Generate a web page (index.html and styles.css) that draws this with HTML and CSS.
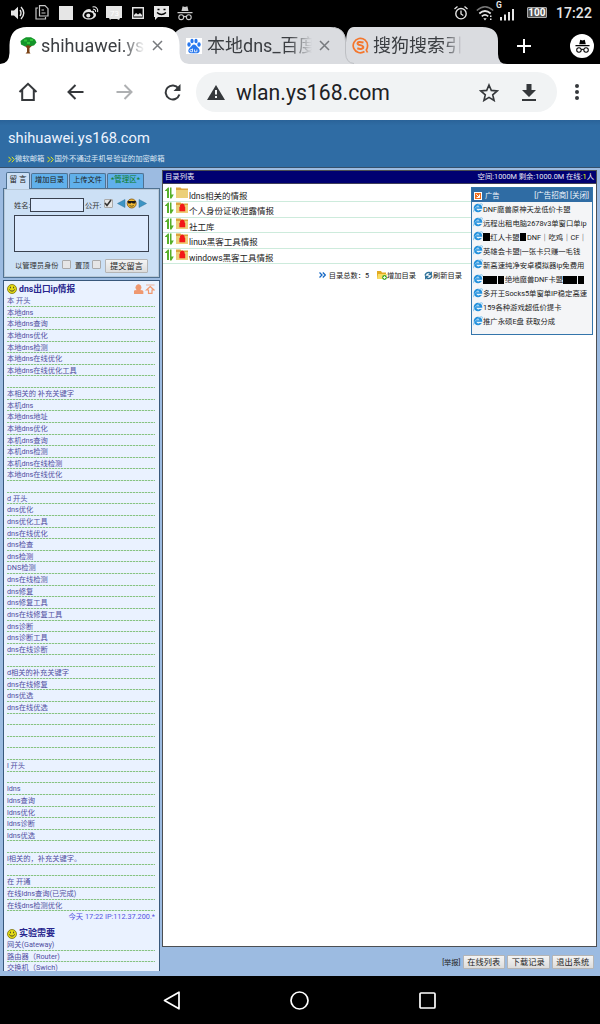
FILE: index.html
```html
<!DOCTYPE html>
<html>
<head>
<meta charset="utf-8">
<title>shihuawei.ys168.com</title>
<link rel="stylesheet" href="styles.css">
</head>
<body>
<svg width="0" height="0" class="defs">
  <defs>
    <symbol id="updown" viewBox="0 0 9 12"><path d="M0 3.500L3 .5h1V11H2V4H0zM5 .5h1.500v7H8.800L6.500 11.500H5z" fill="#58b02c"/></symbol>
    <symbol id="folder" viewBox="0 0 12 11"><path d="M0 0.500h4.500l1 1H12V11H0z" fill="#dba43c"/><path d="M0 3h12v8H0z" fill="#ecd078"/></symbol>
    <symbol id="lock" viewBox="0 0 12 11"><path d="M0 0.500h4.500l1 1H12V11H0z" fill="#dba43c"/><path d="M0 3h12v8H0z" fill="#ecd078"/><path d="M3.400 5h5.800v4.300H3.400z" fill="#f31818"/><path d="M4.400 5.200V4a1.900 1.900 0 0 1 3.800 0v1.200" fill="#f31818" stroke="#f31818" stroke-width="1"/></symbol>
    <symbol id="ie" viewBox="0 0 10 10"><circle cx="5" cy="5" r="4.300" fill="#2591dc"/><path d="M3.200 4.300Q5 2 6.800 4.300zM3.200 5.800H9.500L8.800 7H6.500Q4.500 8.500 3.200 5.800z" fill="#e4f3fd"/><path d="M0.700 9.200C-0.500 7 5.500 0.200 9 0.800 9.800 1.100 9.500 2 9 2.700" fill="none" stroke="#7cc4f0" stroke-width="0.900"/></symbol>
    <symbol id="face" viewBox="0 0 10 10"><circle cx="5" cy="5" r="4.500" fill="#e6dc14" stroke="#77700c" stroke-width="0.800"/><path d="M3.400 2.700v1.600M6.600 2.700v1.600M2.200 5.500Q5 8.800 7.800 5.500" fill="none" stroke="#333" stroke-width="0.900"/></symbol>
    <symbol id="spy" viewBox="0 0 16 16"><path d="M4.500 6L5.600 1.300 8 2l2.400-.7L11.500 6zM0.500 7h15v1.300H0.500z"/><g fill="none" stroke="currentColor" stroke-width="1.100"><circle cx="4.200" cy="12.200" r="2.400"/><circle cx="11.800" cy="12.200" r="2.400"/><path d="M6.600 12q1.400-1.200 2.800 0"/></g></symbol>
  </defs>
</svg>

<div class="status">
  <div class="status-left">
    <svg width="14" height="14" viewBox="0 0 14 14"><path d="M0 4.500h3L7 0.800v12.400L3 9.500H0z" fill="#e6e6e6"/><path d="M9 4q2 3 0 6M10 1q5.500 6 0 12" fill="none" stroke="#e6e6e6" stroke-width="1.400"/></svg>
    <svg class="i-copy" width="14" height="15" viewBox="0 0 14 15"><path d="M4.500 .7H10l3 3V11H4.500zM3 3H1v11h9.500v-2M6.500 5H9M6.500 8h4" fill="none" stroke="#c8c8c8" stroke-width="1.200"/></svg>
    <svg class="i-sq" width="14" height="14"><rect width="14" height="14" fill="#e6e6e6"/></svg>
    <svg class="i-weibo" width="17" height="14" viewBox="0 0 17 14"><path d="M7 3C4 3 .5 6.500 .5 9.300S3.500 13.500 7 13.500s7-2 7-4.600c0-1.500-1-2-2-2.300.5-2-1-2.400-3-1.500C9.300 3.700 8.500 3 7 3z" fill="#e6e6e6"/><ellipse cx="6.800" cy="9.200" rx="4.600" ry="3.100"/><circle cx="6.300" cy="9.500" r="2" fill="#e6e6e6"/><path d="M10.500 1c3-1 6 1.500 5 5M11 3.300c1.800-.3 3 .8 2.500 2.500" fill="none" stroke="#e6e6e6" stroke-width="1.100"/></svg>
    <svg class="i-cal" width="16" height="14" viewBox="0 0 16 14"><path d="M0 0h16v12h-2l-1 2-2-1H5l-1 1-1-2H0z" fill="#e6e6e6"/><text x="4" y="9.500" font-size="8" fill="#fff">73</text></svg>
    <svg class="i-pic" width="12" height="12" viewBox="0 0 12 12"><path d="M.7.7h10.600v10.600H.7z" fill="none" stroke="#e6e6e6" stroke-width="1.400"/><path d="M2 9.500V8l2-2 2 1.500L8 6l2 2v1.500z" fill="#e6e6e6"/></svg>
    <svg class="i-msg" width="15" height="14" viewBox="0 0 15 14"><path d="M0 0h15v11H4l-3 3V11H0z" fill="#e6e6e6"/><path d="M3.500 3.500h2M9.500 3.500h2M3 6.500q4.500 4 9 0" fill="none" stroke="#000" stroke-width="1.300"/></svg>
    <svg class="i-spy" width="16" height="16" fill="#ccc" color="#ccc"><use href="#spy"/></svg>
  </div>
  <div class="status-right">
    <svg width="14" height="14" viewBox="0 0 14 14"><circle cx="7" cy="7.700" r="5.200" fill="none" stroke="#e6e6e6" stroke-width="1.400"/><path d="M.5 3L3.500.6M13.500 3L10.500.6M7 4.500V8l2.300 1.500" fill="none" stroke="#e6e6e6" stroke-width="1.300"/></svg>
    <svg class="i-wifi" width="18" height="16" viewBox="0 0 18 16"><path d="M.8 5.500Q9-2 17.200 5.500" fill="none" stroke="#777" stroke-width="1.500"/><path d="M3.300 8.500q5.700-5 11.400 0M5.800 11.300q3.200-2.800 6.400 0" fill="none" stroke="#e6e6e6" stroke-width="1.700"/><path d="M7.300 13.300h3.400L9 15.500zM14 10.500h1.500v1.500H14zM14 13.500h1.500V15H14z" fill="#e6e6e6"/></svg>
    <div class="signal"><b class="g">G</b><svg width="14" height="12"><path d="M0 8h2v3.500H0zM4 5.500h2v6H4zM8 3h2v8.500H8zM12 0h2v11.500h-2z" fill="#e6e6e6"/></svg></div>
    <span class="battery">100</span>
    <span class="clock">17:22</span>
  </div>
</div>

<div class="tabs">
  <svg class="tab-shapes" width="600" height="37" viewBox="0 0 600 37"><path d="M338 37Q346 37 346 27V16Q346 0 354 0H482Q498 0 498 14V27Q498 37 507 37z" fill="#dadce0"/><path d="M170 37V14Q176 0 188 0H330Q345 0 346 14V27Q346 37 354 37z" fill="#dadce0"/><path d="M334 .5Q345 2 345.500 14V26Q346 36 354 36.500" fill="none" stroke="#bdbfc3"/><path d="M0 37Q9 37 9.500 26V18Q10 0 27 0H162Q179 0 179.500 18V26Q180 37 189 37z" fill="#fff"/></svg>
  <div class="tab-row">
    <div class="tab t1">
      <svg width="17" height="17" viewBox="0 0 17 17"><path d="M7.300 8L4 8 7 11v4l-1.500 1.500h5L9.500 15v-4L13 8z" fill="#7b4316"/><path d="M3 2L6 .3h5L15 2.500l1.500 3L14 8.500l-4 .5-2-1-3 1.500L1 7.500.5 4z" fill="#15952a"/><path d="M4 2.500h3v2H4zM10 2h3v2h-3zM7 5h3v2H7z" fill="#2fc436"/></svg>
      <span class="tt">shihuawei.ys</span>
      <svg class="x" width="11" height="11" viewBox="0 0 11 11"><path d="M1 1l9 9M10 1l-9 9" stroke="#777a7e" stroke-width="1.500"/></svg>
    </div>
    <div class="tab t2">
      <svg width="16" height="16" viewBox="0 0 16 16"><path d="M0 0h16v16H0z" fill="#fff"/><g fill="#2878ee"><ellipse cx="3" cy="6.500" rx="1.700" ry="2.200"/><ellipse cx="6" cy="3" rx="1.600" ry="2.200"/><ellipse cx="10" cy="3" rx="1.600" ry="2.200"/><ellipse cx="13" cy="6.500" rx="1.700" ry="2.200"/><path d="M8 6.500c2 0 2.500 2 4 3.300 2.500 2.200 2 5.200-.8 5.400-1.700 0-4.700 0-6.400 0C2 15 1.500 12 4 9.800 5.500 8.500 6 6.500 8 6.500z"/></g><path d="M6.500 10.500v3.300H5a1 1 0 0 1 0-2.200h1.500M8.500 11.500v2.300h2.400v-2.300" fill="none" stroke="#fff" stroke-width=".8"/></svg>
      <span class="tt">本地dns_百度</span>
      <svg class="x" width="11" height="11" viewBox="0 0 11 11"><path d="M1 1l9 9M10 1l-9 9" stroke="#777a7e" stroke-width="1.500"/></svg>
    </div>
    <div class="tab t3">
      <svg width="17" height="17" viewBox="0 0 17 17"><path d="M12.500 14.500A7.200 7.200 0 1 1 15.600 8.500Q15.600 11 14.300 13L15.500 15.500" fill="none" stroke="#f4762c" stroke-width="1.700"/><path d="M11.500 5.500Q5.500 4 5.500 6.500c0 2.200 5.800 1 5.800 3.600 0 2.400-4 2-6 1.200" fill="none" stroke="#f4762c" stroke-width="2"/></svg>
      <span class="tt">搜狗搜索引</span>
    </div>
    <svg class="plus" width="14" height="14"><path d="M7 0v14M0 7h14" stroke="#fff" stroke-width="2"/></svg>
    <div class="incog"><svg width="15" height="16" viewBox="0 0 16 16" fill="#000" color="#000"><use href="#spy" width="16" height="16"/></svg></div>
  </div>
</div>

<div class="toolbar">
  <svg class="b-home" width="20" height="20" viewBox="0 0 20 20"><path d="M1.500 10L10 1.800 18.500 10M4.200 8v10h11.600V8" fill="none" stroke="#35383b" stroke-width="2"/></svg>
  <svg class="b-back" width="17" height="16" viewBox="0 0 17 16"><path d="M16.500 8H2M8.500 1L1.500 8l7 7" fill="none" stroke="#35383b" stroke-width="2"/></svg>
  <svg class="b-fwd" width="17" height="16" viewBox="0 0 17 16"><path d="M.5 8H15M8.500 1l7 7-7 7" fill="none" stroke="#aeb0b2" stroke-width="2"/></svg>
  <svg class="b-rel" width="17" height="17" viewBox="0 0 17 17"><path d="M14.500 4.500A7 7 0 1 0 15.400 10.500" fill="none" stroke="#35383b" stroke-width="2"/><path d="M16.500 0v7h-7z" fill="#35383b"/></svg>
  <div class="omnibox">
    <svg width="18" height="15" viewBox="0 0 18 15"><path d="M9 0l9 15H0z" fill="#35383b"/><path d="M8 5h2v4.500H8zM8 11h2v2H8z" fill="#f1f3f4"/></svg>
    <span class="url">wlan.ys168.com</span>
    <svg class="star" width="20" height="19" viewBox="0 0 20 19"><path d="M10 2l2.300 5.400 5.900.5-4.500 3.900 1.400 5.700L10 14.400l-5.100 3.100 1.400-5.700L1.800 7.900l5.900-.5z" fill="none" stroke="#35383b" stroke-width="1.600"/></svg>
    <svg class="dl" width="14" height="17" viewBox="0 0 14 17"><path d="M4.500 0h5v6H14l-7 7-7-7h4.500zM0 15h14v2H0z" fill="#35383b"/></svg>
  </div>
  <svg class="dots" width="4" height="16" fill="#35383b"><circle cx="2" cy="2" r="2"/><circle cx="2" cy="8" r="2"/><circle cx="2" cy="14" r="2"/></svg>
</div>

<div class="page">
  <div class="site-head">
    <div class="site-title">shihuawei.ys168.com</div>
    <div class="notice"><svg width="7" height="7" viewBox="0 0 7 7"><path d="M.5 .8L3 3.500.5 6.200M3.800.8L6.300 3.500 3.800 6.200" fill="none" stroke="#e6ea12"/></svg>微软邮箱<svg class="n2" width="7" height="7" viewBox="0 0 7 7"><path d="M.5 .8L3 3.500.5 6.200M3.800.8L6.300 3.500 3.800 6.200" fill="none" stroke="#e6ea12"/></svg>国外不通过手机号验证的加密邮箱</div>
  </div>
  <div class="cols">
    <div class="left">
      <div class="ftabs"><span class="on">留 言</span><span>增加目录</span><span>上传文件</span><span class="green">*管理区*</span></div>
      <div class="form">
        <div class="r1"><label>姓名:</label><div class="inp"></div><label class="pub">公开:</label><div class="cb"><svg width="8" height="8"><path d="M1 4l2 2.500L7 1" fill="none" stroke="#333" stroke-width="1.600"/></svg></div>
          <svg class="arrows" width="30" height="11" viewBox="0 0 30 11"><path d="M.5 5.500L8 1.500v8z" fill="#3c94c4" stroke="#2d7098" stroke-width=".5"/><circle cx="14.700" cy="5.500" r="4.500" fill="#f0b932" stroke="#80520c" stroke-width=".8"/><path d="M10.500 3h8.500l-.8 2.500h-2.500l-1-1-1 1h-2.400z" fill="#191919"/><path d="M12.500 7.500q2.200 1.500 4.400 0" fill="none" stroke="#442" stroke-width=".8"/><path d="M29.500 5.500L22 1.500v8z" fill="#3c94c4" stroke="#2d7098" stroke-width=".5"/></svg></div>
        <div class="area"></div>
        <div class="r3"><label>以管理员身份</label><div class="cb"></div><label class="top">置顶</label><div class="cb"></div><div class="btn">提交留言</div></div>
      </div>
      <div class="msgs">
        <div class="mh"><svg width="10" height="10"><use href="#face"/></svg><b>dns出口ip情报</b><svg class="mico" width="21" height="10" viewBox="0 0 21 10"><path d="M0 10V7l3-1Q.8 4 2.500 1.500q2-2 4 0Q8 4 6 6l3 1v3zM12 1h8.500" fill="#ef9870" stroke="#ef9870" stroke-width=".7"/><path d="M16.200 2.500l3.800 3.500h-2v3.300h-3.500V6h-2z" fill="none" stroke="#ef9870" stroke-width="1.200"/></svg></div>
        <div class="lines">
          <p>本 开头</p><p>本地dns</p><p>本地dns查询</p><p>本地dns优化</p><p>本地dns检测</p><p>本地dns在线优化</p><p>本地dns在线优化工具</p><p></p>
          <p>本相关的 补充关键字</p><p>本机dns</p><p>本地dns地址</p><p>本地dns优化</p><p>本机dns查询</p><p>本机dns检测</p><p>本机dns在线检测</p><p>本地dns在线优化</p><p></p>
          <p>d 开头</p><p>dns优化</p><p>dns优化工具</p><p>dns在线优化</p><p>dns检查</p><p>dns检测</p><p>DNS检测</p><p>dns在线检测</p><p>dns修复</p><p>dns修复工具</p><p>dns在线修复工具</p><p>dns诊断</p><p>dns诊断工具</p><p>dns在线诊断</p><p></p>
          <p>d相关的补充关键字</p><p>dns在线修复</p><p>dns优选</p><p>dns在线优选</p><p></p><p></p><p></p><p></p>
          <p>l 开头</p><p></p><p>ldns</p><p>ldns查询</p><p>ldns优化</p><p>ldns诊断</p><p>ldns优选</p><p></p>
          <p>l相关的，补充关键字。</p><p></p><p>在 开通</p><p>在线ldns查询(已完成)</p><p>在线dns检测优化</p>
        </div>
        <div class="stamp">今天 17:22 IP:112.37.200.*</div>
        <div class="mh second"><svg width="10" height="10"><use href="#face"/></svg><b>实验需要</b></div>
        <div class="lines"><p>网关(Gateway)</p><p>路由器（Router)</p><p>交换机（Swich)</p></div>
      </div>
    </div>
    <div class="right">
      <div class="panel">
        <div class="ptitle"><span>目录列表</span><span>空间:1000M 剩余:1000.0M 在线:<em>1</em>人</span></div>
        <div class="pbody">
          <div class="dirs">
            <div class="dir"><svg class="ud"><use href="#updown"/></svg><svg class="fo"><use href="#folder"/></svg><span>ldns相关的情报</span></div>
            <div class="dir"><svg class="ud"><use href="#updown"/></svg><svg class="fo"><use href="#lock"/></svg><span>个人身份证收泄露情报</span></div>
            <div class="dir"><svg class="ud"><use href="#updown"/></svg><svg class="fo"><use href="#lock"/></svg><span>社工库</span></div>
            <div class="dir"><svg class="ud"><use href="#updown"/></svg><svg class="fo"><use href="#lock"/></svg><span>linux黑客工具情报</span></div>
            <div class="dir"><svg class="ud"><use href="#updown"/></svg><svg class="fo"><use href="#lock"/></svg><span>windows黑客工具情报</span></div>
            <div class="sum"><svg width="7" height="6" viewBox="0 0 7 6"><path d="M.5.5L3 3 .5 5.500M3.800.5L6.300 3 3.800 5.500" fill="none" stroke="#1769c4" stroke-width="1.300"/></svg><span class="total">目录总数：5</span><svg class="addf" width="10" height="10" viewBox="0 0 10 10"><path d="M0 1h4l1 1.500h4V9H0z" fill="#e2aa22"/><path d="M1 4h9L8 9H0z" fill="#f8dc62"/><circle cx="7.500" cy="7.500" r="2.400" fill="#42a82e"/><path d="M7.500 6v3M6 7.500h3" stroke="#fff" stroke-width=".8"/></svg><span class="add">增加目录</span><svg class="ref" width="9" height="9" viewBox="0 0 9 9"><path d="M1 4.500Q2 1 5.500 1.500L7 3M8 4.500Q7 8 3.500 7.500L2 6M7.300.7V3.500H4.500M1.700 8.300V5.500h2.800" fill="none" stroke="#2c7099" stroke-width="1.300"/></svg><span>刷新目录</span></div>
          </div>
          <div class="ads">
            <div class="adh"><svg width="8" height="8" viewBox="0 0 8 8"><path d="M0 0h8v8H0z" fill="#fff"/><path d="M1 1h6v6H1z" fill="#f26c1a"/><path d="M2.300 2.300l3 3M5.500 2.500v3h-3" fill="none" stroke="#fff"/></svg><span>广告</span><span class="adr">[广告招商] [关闭]</span></div>
            <div class="ad"><svg><use href="#ie"/></svg>DNF魔兽原神天龙低价卡盟</div>
            <div class="ad"><svg><use href="#ie"/></svg>远程出租电脑2678v3单窗口单ip</div>
            <div class="ad"><svg><use href="#ie"/></svg><u></u>红人卡盟<u></u>DNF｜吃鸡｜CF｜</div>
            <div class="ad"><svg><use href="#ie"/></svg>英雄会卡盟|一张卡只赚一毛钱</div>
            <div class="ad"><svg><use href="#ie"/></svg>新高速纯净安卓模拟器ip免费用</div>
            <div class="ad"><svg><use href="#ie"/></svg><u></u><u></u><u></u>绝地魔兽DNF卡盟<u></u><u></u><u></u></div>
            <div class="ad"><svg><use href="#ie"/></svg>多开王Socks5单窗单IP稳定高速</div>
            <div class="ad"><svg><use href="#ie"/></svg>159各种游戏超低价提卡</div>
            <div class="ad"><svg><use href="#ie"/></svg>推广永硕E盘 获取分成</div>
          </div>
        </div>
      </div>
      <div class="foot"><span>[举报]</span><div class="btn">在线列表</div><div class="btn">下载记录</div><div class="btn">退出系统</div></div>
    </div>
  </div>
</div>

<div class="nav">
  <svg width="17" height="19" viewBox="0 0 17 19"><path d="M16 1.200v16.600L1.500 9.500z" fill="none" stroke="#fff" stroke-width="1.700" stroke-linejoin="round"/></svg>
  <svg width="19" height="19"><circle cx="9.500" cy="9.500" r="8.500" fill="none" stroke="#fff" stroke-width="1.700"/></svg>
  <svg width="17" height="17"><rect x="1" y="1" width="15" height="15" rx="1" fill="none" stroke="#fff" stroke-width="1.700"/></svg>
</div>
</body>
</html>
```

FILE: styles.css
```css
* { box-sizing: border-box; }
body { margin: 0; width: 600px; height: 1024px; overflow: hidden; background: #000; font-family: Roboto, "Noto Sans CJK SC", sans-serif; display: flex; flex-direction: column; white-space: nowrap; }
svg { display: block; flex: none; }
.defs { position: absolute; }
p { margin: 0; }
em { font-style: normal; }

.status { height: 27px; flex: none; display: flex; justify-content: space-between; padding: 0 8px 0 11px; color: #e6e6e6; }
.status-left, .status-right { display: flex; align-items: center; height: 25px; }
.i-copy { margin-left: 10px; }
.i-sq { margin-left: 10px; }
.i-weibo { margin-left: 9px; }
.i-cal { margin-left: 7px; }
.i-pic { margin-left: 10px; }
.i-msg { margin-left: 10px; }
.i-spy { margin-left: 8px; }
.i-wifi { margin-left: 8px; }
.signal { width: 20px; height: 20px; margin-left: 2px; display: flex; flex-direction: column; margin-top: -4px; }
.g { font-size: 8.500px; line-height: 8px; height: 8px; }
.signal svg { margin-left: 4px; }
.battery { margin-left: 11px; width: 20px; height: 11px; border: 1px solid #aaa; background: #555; color: #fff; font-size: 10px; line-height: 9px; font-weight: 700; text-align: center; border-radius: 1px; }
.clock { margin-left: 9px; font-size: 14px; font-weight: 500; letter-spacing: .1px; }

.tabs { height: 37px; flex: none; position: relative; }
.tab-shapes { position: absolute; left: 0; top: 0; }
.tab-row { position: relative; height: 37px; display: flex; align-items: center; }
.tab { display: flex; align-items: center; height: 37px; flex: none; color: #3b3e42; }
.t1 { width: 166px; padding-left: 20px; }
.t2 { width: 166px; padding-left: 20px; }
.t3 { width: 185px; padding-left: 20px; }
.tt { overflow: hidden; font-size: 18px; line-height: 26px; margin-left: 4px; width: 104px; -webkit-mask-image: linear-gradient(90deg, #000 78%, transparent 100%); }
.t2 .tt { margin-left: 5px; width: 105px; }
.t3 .tt { width: 90px; }
.t1 .x { margin-left: 7px; }
.t2 .x { margin-left: 7px; }
.incog { margin-left: 39px; width: 24px; height: 24px; border-radius: 12px; background: #fff; display: flex; align-items: center; justify-content: center; }

.toolbar { height: 56px; flex: none; background: #fff; display: flex; align-items: center; padding-left: 18px; }
.b-back { margin-left: 29px; }
.b-fwd { margin-left: 32px; }
.b-rel { margin-left: 31px; }
.omnibox { margin-left: 15px; width: 361px; height: 40px; border-radius: 20px; background: #f1f3f4; display: flex; align-items: center; padding-left: 11px; }
.url { margin-left: 11px; width: 243px; font-size: 21.200px; line-height: 26px; color: #202124; padding-top: 1px; }
.dl { margin-left: 23px; }
.dots { margin-left: 18px; }

.page { height: 856px; flex: none; background: #9cbbe1; display: flex; flex-direction: column; font-size: 7.250px; line-height: 11px; color: #222; }
.site-head { height: 48px; background: linear-gradient(#2a6399, #2f6ca4 12%, #2f6ca4); border-bottom: 1px solid #35506b; padding: 9px 0 0 8px; flex: none; }
.site-title { color: #eef4ff; font-size: 14.700px; line-height: 19px; }
.notice { color: #dfe9f5; font-size: 7.350px; line-height: 10px; margin-top: 6px; display: flex; align-items: center; }
.notice .n2 { margin-left: 3px; }
.cols { height: 808px; display: flex; }
.left { width: 157px; margin-left: 3px; flex: none; padding-top: 4px; }
.ftabs { display: flex; gap: 1px; padding-left: 3px; height: 16px; align-items: flex-end; }
.ftabs span { height: 15px; width: 37px; background: #60b0eb; border: 1px solid #4f7191; border-bottom: 0; border-radius: 2px 2px 0 0; text-align: center; line-height: 12px; }
.ftabs .on { width: 24px; height: 17px; margin-bottom: -1px; background: #cce0f5; position: relative; font-size: 7.500px; line-height: 14px; }
.ftabs .green { color: #0a7c1c; font-size: 7.500px; }
.form { height: 90px; background: #cce0f5; border: 1px solid #4f7191; box-shadow: inset 0 0 0 1px #b7c8d8; padding: 9px 0 0 10px; color: #333; }
.r1, .r3 { display: flex; align-items: center; }
.r1 label:first-child { width: 16px; }
.inp { width: 54px; height: 14px; background: #dceafe; border: 1px solid #39414f; }
.r1 .pub { width: 17px; margin-left: 1px; }
.cb { width: 9px; height: 9px; border: 1px solid #aaa; background: #e6e6e6; border-radius: 1px; }
.r1 .cb { margin: -3px 0 0 2px; }
.cb svg { margin: -1px 0 0 -1px; }
.arrows { margin: -3px 0 0 4px; }
.area { width: 135px; height: 37px; margin-top: 3px; background: #dceafe; border: 1px solid #39414f; }
.r3 { margin-top: 7px; padding-left: 1px; }
.r3 label { width: 44px; margin-top: -1px; }
.r3 .cb { margin: -4px 0 0 3px; }
.r3 label.top { width: 14px; margin-left: 4px; }
.btn { height: 14px; border: 1px solid #b5b5b5; background: linear-gradient(#f4f4f4, #dcdcdc); border-radius: 1px; font-size: 8.200px; line-height: 12px; text-align: center; color: #222; }
.r3 .btn { width: 43px; margin-left: 4px; }

.msgs { margin-top: 2px; height: 691px; border: 1px solid #39587b; border-bottom: 0; background: #eaf2ff; overflow: hidden; padding: 1px 4px 0 3px; color: #514f9f; }
.mh { height: 13px; display: flex; align-items: center; color: #28268e; font-size: 9px; }
.mh b { margin-left: 2px; }
.mh svg { margin-top: 1px; }
.mh .mico { margin: 0 0 0 auto; }
.mh:first-child b { font-size: 8.700px; margin-top: 1px; }
.lines p { height: 11.640px; line-height: 11px; background: repeating-linear-gradient(90deg, #86c283 0 2px, #cfe6d6 2px 3px) left bottom / 100% 1px no-repeat; }
.stamp { text-align: right; color: #5452e2; font-size: 7.300px; height: 13px; line-height: 12px; }
.mh.second { height: 15px; padding-top: 3px; }

.right { width: 436px; margin-left: 2px; padding-top: 2px; }
.panel { width: 435px; height: 777px; border: 1px solid #4c4f53; background: #fff; }
.ptitle { height: 13px; background: #000071; border-bottom: 1px solid #404058; color: #e7e7f6; display: flex; justify-content: space-between; padding: 0 2px; line-height: 11px; font-size: 7.350px; }
.ptitle em { color: #ff0; }
.pbody { display: flex; align-items: flex-start; }
.dirs { width: 308px; padding-top: 3px; }
.dir { height: 15.400px; display: flex; border-bottom: 1px solid #cdebdc; padding-left: 2px; font-size: 8.500px; line-height: 18px; }
.ud { width: 9px; height: 12px; }
.fo { width: 12px; height: 11px; margin-left: 2px; }
.dir span { margin-left: 1px; }
.sum { display: flex; align-items: center; margin-top: 6px; justify-content: flex-end; padding-right: 9px; }
.total { margin-left: 3px; }
.addf { margin-left: 8px; }
.ref { margin-left: 8px; }
.ads { width: 122px; height: 148px; margin: 3px 0 0; background: #f4f5f7; border: 1px solid #3475ab; flex: none; color: #222; }
.adh { height: 14px; background: #2f6ca4; color: #f2f6fb; display: flex; align-items: center; padding: 1px 3px 0 2px; }
.adh span { margin-left: 3px; }
.adh .adr { margin-left: auto; font-size: 7.500px; }
.ad { height: 14.100px; display: flex; align-items: center; padding-left: 1px; overflow: hidden; font-size: 7.350px; }
.ad svg { width: 10px; height: 10px; margin-top: -2px; }
.ad u { width: 6.500px; height: 8px; background: #000; margin-right: .8px; flex: none; }
.foot { display: flex; align-items: center; justify-content: flex-end; gap: 2px; padding: 8px 4px 0 0; }
.foot .btn { width: 42.500px; }

.nav { height: 48px; flex: none; background: #000; display: flex; align-items: center; padding-left: 163px; }
.nav svg:nth-child(2) { margin-left: 110px; }
.nav svg:nth-child(3) { margin-left: 110px; }
```
